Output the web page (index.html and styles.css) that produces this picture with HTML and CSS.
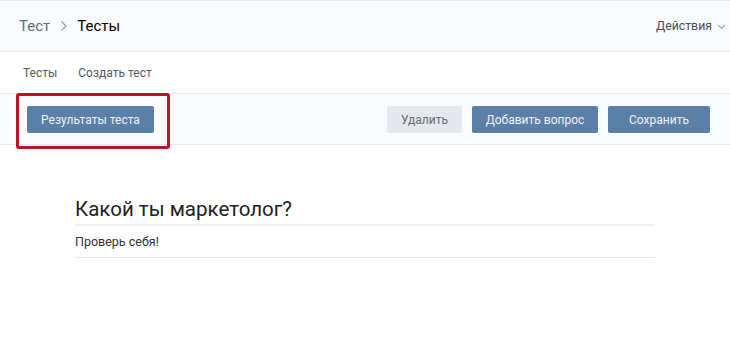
FILE: index.html
```html
<!DOCTYPE html>
<html lang="ru">
<head>
<meta charset="utf-8">
<link rel="stylesheet" href="styles.css">
</head>
<body>
<div class="page">
  <header class="header">
    <nav class="crumbs">
      <span class="crumb">Тест</span>
      <svg class="crumb-sep" width="8" height="12" viewBox="0 0 8 12"><path d="M1.5 1.5 L6 6 L1.5 10.5" fill="none" stroke="#9aa0a8" stroke-width="1.3"/></svg>
      <span class="crumb current">Тесты</span>
    </nav>
    <div class="actions">Действия <svg class="caret" width="9" height="6" viewBox="0 0 9 6"><path d="M1 1 L4.5 4.5 L8 1" fill="none" stroke="#a0a6ad" stroke-width="1.2"/></svg></div>
  </header>
  <div class="tabs">
    <a class="tab">Тесты</a>
    <a class="tab">Создать тест</a>
  </div>
  <div class="toolbar">
    <div class="left-group">
      <button class="btn btn-primary">Результаты теста</button>
      <span class="highlight"></span>
    </div>
    <div class="right-group">
      <button class="btn btn-secondary btn-del">Удалить</button>
      <button class="btn btn-primary btn-add">Добавить вопрос</button>
      <button class="btn btn-primary btn-save">Сохранить</button>
    </div>
  </div>
  <main class="content">
    <h1 class="title">Какой ты маркетолог?</h1>
    <p class="desc">Проверь себя!</p>
  </main>
</div>
</body>
</html>
```
FILE: styles.css
```css
* { box-sizing: border-box; }
html, body { margin: 0; padding: 0; background: #fff; }
body { font-family: Roboto, "Open Sans", Arial, sans-serif; width: 730px; height: 355px; overflow: hidden; }

.header {
  height: 52px;
  background: #fafbfc;
  border-top: 1px solid #e7e8ec;
  border-bottom: 1px solid #e7e8ec;
  display: flex;
  align-items: center;
  justify-content: space-between;
  padding: 0 4px 0 19px;
}
.crumbs { display: flex; align-items: center; font-size: 15px; }
.crumb { color: #656a70; }
.crumb.current { color: #000; }
.crumb-sep { margin: 0 9px 0 10px; }
.actions { font-size: 12.3px; color: #4a4f55; display: flex; align-items: center; gap: 5px; }
.caret { margin-top: 1px; }

.tabs {
  height: 42px;
  border-bottom: 1px solid #e7e8ec;
  display: flex;
  align-items: center;
  padding-left: 23px;
  gap: 21px;
  font-size: 12px;
}
.tab { color: #555a60; }

.toolbar {
  height: 51px;
  background: #fafbfc;
  border-bottom: 1px solid #e7e8ec;
  display: flex;
  justify-content: space-between;
  align-items: flex-start;
  padding: 12px 20px 0 27px;
}
.left-group { position: relative; }
.right-group { display: flex; gap: 10px; }

.btn {
  height: 27px;
  border: 0;
  border-radius: 2px;
  font-family: inherit;
  font-size: 12px;
  padding: 0;
  cursor: pointer;
}
.btn-primary { background: #5b7fa6; color: #eef3f8; width: 127px; }
.btn-secondary { background: #e5e9ee; color: #5f6b78; width: 75px; }
.btn-add { width: 126px; }
.btn-save { width: 102px; }

.highlight {
  position: absolute;
  left: -11px;
  top: -13px;
  width: 154px;
  height: 56px;
  border: 3px solid #b5161f;
  border-radius: 3px;
}

.content { margin: 52px 75px 0; width: 580px; }
.title {
  margin: 0;
  font-weight: 400;
  font-size: 20.5px;
  line-height: 24px;
  color: #222;
  padding-bottom: 3px;
  border-bottom: 2px solid #eeeff1;
}
.desc {
  margin: 0;
  font-size: 12.5px;
  line-height: 18px;
  color: #333;
  padding: 7px 0 6px;
  border-bottom: 1px solid #e4e6e9;
}
```
